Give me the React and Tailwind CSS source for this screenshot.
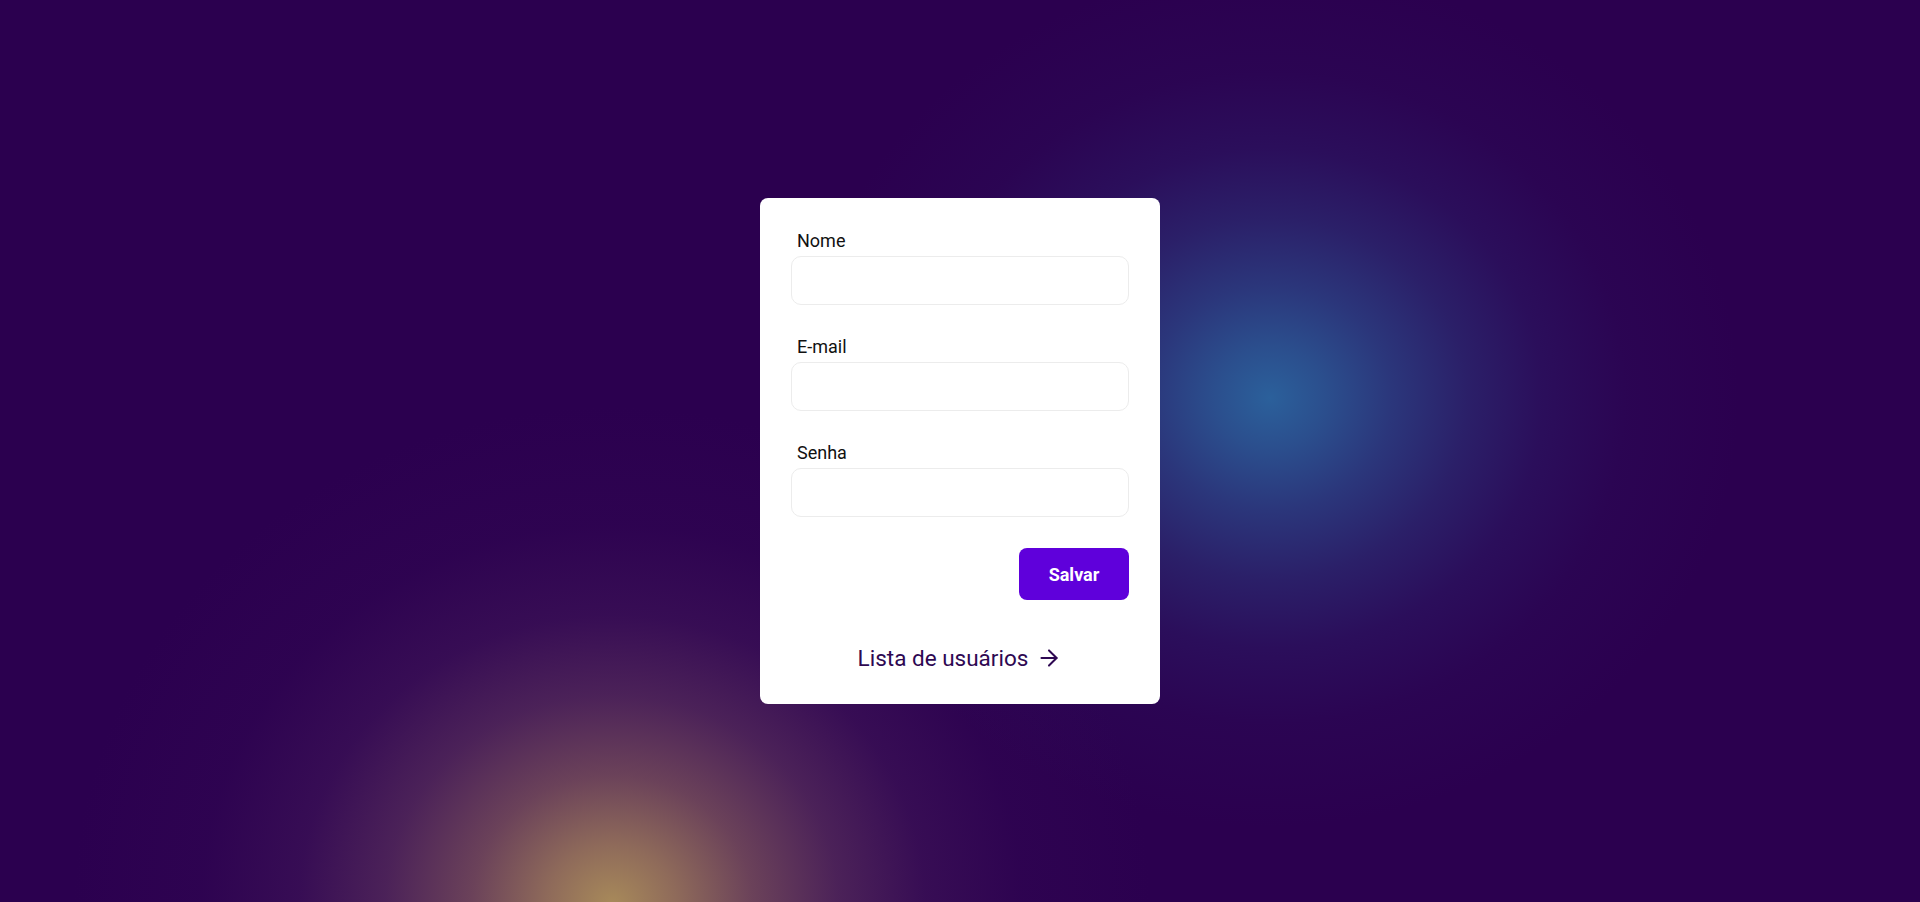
import React from "react";
import { ArrowRight } from "lucide-react";

function Field({ label, type }) {
  return (
    <div className="flex flex-col">
      <label className="pl-[6px] text-[18px] leading-[21px] text-[#111]">
        {label}
      </label>
      <input
        type={type}
        className="mt-[5px] h-[49px] w-full rounded-[10px] border border-[#ececec] bg-white px-3 text-[16px] outline-none"
      />
    </div>
  );
}

export default function App() {
  return (
    <section
      className="flex min-h-screen items-center justify-center bg-[#2b004f] bg-[radial-gradient(ellipse_470px_430px_at_1270px_398px,rgba(43,96,155,1)_0%,rgba(43,92,152,0.85)_12%,rgba(43,85,148,0.64)_26%,rgba(43,75,140,0.42)_42%,rgba(43,60,130,0.24)_58%,rgba(43,45,115,0.1)_76%,transparent_100%),radial-gradient(ellipse_540px_500px_at_612px_905px,rgba(168,138,90,1)_0%,rgba(160,125,92,0.85)_12%,rgba(140,100,95,0.66)_26%,rgba(115,75,100,0.45)_42%,rgba(90,50,100,0.26)_58%,rgba(70,30,95,0.1)_76%,transparent_100%)]"
      style={{ fontFamily: "Roboto, 'Liberation Sans', sans-serif" }}
    >
      <div className="w-[400px] rounded-lg bg-white px-[31px] pt-[32px] pb-[32px]">
        <form className="flex flex-col gap-[31px]" onSubmit={(e) => e.preventDefault()}>
          <Field label="Nome" type="text" />
          <Field label="E-mail" type="email" />
          <Field label="Senha" type="password" />
        </form>

        <div className="mt-[31px] flex justify-end">
          <button className="h-[52px] w-[110px] rounded-lg bg-[#5f00db] text-[18px] font-bold text-white">
            Salvar
          </button>
        </div>

        <a
          href="#"
          className="mt-[44px] flex items-center justify-center gap-[8px] text-[22.5px] leading-[28px] text-[#2e0852]"
        >
          Lista de usuários
          <ArrowRight size={26} strokeWidth={1.85} />
        </a>
      </div>
    </section>
  );
}
